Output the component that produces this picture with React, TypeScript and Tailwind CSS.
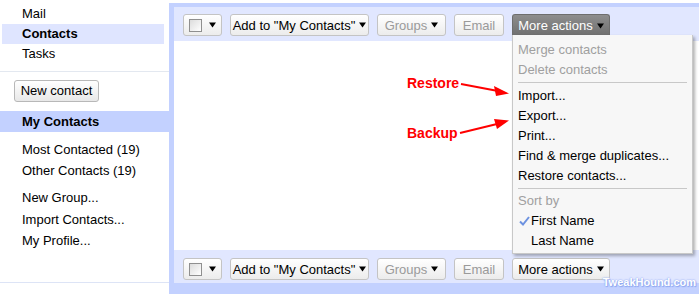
import { ReactNode } from "react";

function cn(...c: Array<string | false | undefined>) {
  return c.filter(Boolean).join(" ");
}

function Caret({ light }: { light?: boolean }) {
  return (
    <svg width="7" height="6" viewBox="0 0 7 6" className="inline-block">
      <path d="M0 0.5h7L3.5 5.5z" fill={light ? "#fff" : "#000"} />
    </svg>
  );
}

function Btn({
  children,
  className,
  disabled,
}: {
  children: ReactNode;
  className?: string;
  disabled?: boolean;
}) {
  return (
    <div
      className={cn(
        "flex h-[22px] items-center justify-center gap-[4px] rounded-[3px] border border-[#c4c4c4] bg-gradient-to-b from-[#ffffff] to-[#ececec] text-[13px] leading-none shadow-[inset_0_1px_0_#fff]",
        disabled ? "text-[#9a9a9a]" : "text-black",
        className,
      )}
    >
      {children}
    </div>
  );
}

function Toolbar({ active }: { active?: boolean }) {
  return (
    <div className="flex items-center gap-2 pl-[9px]">
      <Btn className="w-[39px] gap-[7px]">
        <span className="h-[13px] w-[13px] border border-[#8f8f8f] bg-gradient-to-br from-[#dcdcdc] to-[#ffffff]" />
        <Caret />
      </Btn>
      <Btn className="w-[139px]">
        Add to "My Contacts" <Caret />
      </Btn>
      <Btn className="w-[69px]" disabled>
        Groups <Caret />
      </Btn>
      <Btn className="w-[50px]" disabled>
        Email
      </Btn>
      {active ? (
        <div className="flex h-[22px] w-[98px] items-center justify-center gap-[4px] rounded-t-[3px] border border-b-0 border-[#6e6e6e] bg-gradient-to-b from-[#8e8e8e] to-[#6f6f6f] text-[13px] leading-none text-white">
          More actions <Caret />
        </div>
      ) : (
        <Btn className="w-[98px]">
          More actions <Caret />
        </Btn>
      )}
    </div>
  );
}

function MenuItem({ children, dim }: { children: ReactNode; dim?: boolean }) {
  return (
    <div className={cn("h-5 pl-[5px] leading-5", dim ? "text-[#a0a0a0]" : "text-black")}>{children}</div>
  );
}

export default function App() {
  return (
    <div
      className="relative flex h-[294px] w-[699px] overflow-hidden bg-white text-[13px]"
      style={{ fontFamily: '"Liberation Sans", Arial, sans-serif' }}
    >
      {/* sidebar */}
      <div className="flex w-[169px] shrink-0 flex-col pt-[4px] text-black">
        <div className="h-5 pl-[22px] leading-5">Mail</div>
        <div className="mx-[2px] h-5 w-[162px] bg-[#dfe5ff] pl-[20px] font-bold leading-5">Contacts</div>
        <div className="h-5 pl-[22px] leading-5">Tasks</div>
        <div className="mt-[7px] h-px bg-[#e3e8f0]" />
        <div className="mt-[8px] pl-[14px]">
          <div className="flex h-[22px] w-[85px] items-center justify-center rounded-[3px] border border-[#b8b8b8] bg-gradient-to-b from-white to-[#e8e8e8]">
            New contact
          </div>
        </div>
        <div className="mt-[9px] h-[21px] bg-[#c3d1ff] pl-[22px] font-bold leading-[21px]">My Contacts</div>
        <div className="mt-[7px] h-[21px] pl-[22px] leading-[21px]">Most Contacted (19)</div>
        <div className="h-[21px] pl-[22px] leading-[21px]">Other Contacts (19)</div>
        <div className="mt-[6px] h-[22px] pl-[22px] leading-[22px]">New Group...</div>
        <div className="h-[21px] pl-[22px] leading-[21px]">Import Contacts...</div>
        <div className="h-[21px] pl-[22px] leading-[21px]">My Profile...</div>
        <div className="mt-auto mb-[11px] h-px bg-[#dde4f6]" />
      </div>

      {/* main panel */}
      <div className="mt-[3px] flex h-[291px] flex-1 flex-col bg-[#c3d1ff] pl-[5px] pt-[4px]">
        <div className="flex h-[34px] shrink-0 flex-col bg-[#e1e7ff] pt-[7px]">
          <Toolbar active />
        </div>
        <div className="flex-1 bg-white" />
        <div className="flex h-[33px] shrink-0 flex-col bg-[#e1e7ff] pt-[8px]">
          <Toolbar />
        </div>
        <div className="h-[11px] shrink-0" />
      </div>

      {/* dropdown menu */}
      <div className="absolute left-[512px] top-[35px] w-[181px] border border-t-0 border-[#c8c8c8] bg-[#f7f7f7] pb-[2px] pt-[5px] shadow-[2px_2px_3px_rgba(0,0,0,0.3)]">
        <MenuItem dim>Merge contacts</MenuItem>
        <MenuItem dim>Delete contacts</MenuItem>
        <div className="mx-[5px] mb-[3px] mt-[2px] h-px bg-[#c8c8c8]" />
        <MenuItem>Import...</MenuItem>
        <MenuItem>Export...</MenuItem>
        <MenuItem>Print...</MenuItem>
        <MenuItem>Find &amp; merge duplicates...</MenuItem>
        <MenuItem>Restore contacts...</MenuItem>
        <div className="mx-[5px] my-[2px] h-px bg-[#c8c8c8]" />
        <MenuItem dim>Sort by</MenuItem>
        <div className="flex h-5 items-center pl-[6px] leading-5">
          <svg width="11" height="10" viewBox="0 0 11 10" className="mr-[1px]">
            <path d="M1 5.5l3 3L10 1" fill="none" stroke="#6d92e0" strokeWidth="2" />
          </svg>
          First Name
        </div>
        <div className="h-5 pl-[18px] leading-5">Last Name</div>
      </div>

      {/* annotations */}
      <span className="absolute left-[407px] top-[73px] text-[14px] font-bold text-[#ff0000]">Restore</span>
      <span className="absolute left-[407px] top-[123px] text-[14px] font-bold text-[#ff0000]">Backup</span>
      <svg className="pointer-events-none absolute left-0 top-0" width="699" height="294">
        <line x1="461" y1="84" x2="498" y2="91" stroke="#ff0000" strokeWidth="2" />
        <path d="M509 93.5L494 86L496 96z" fill="#ff0000" />
        <line x1="460" y1="133" x2="497" y2="124" stroke="#ff0000" strokeWidth="2" />
        <path d="M509 120.5L494 119L497 129z" fill="#ff0000" />
      </svg>

      {/* watermark */}
      <span
        className="absolute right-[3px] top-[276px] whitespace-nowrap text-[11px] font-bold leading-[13px] text-white"
        style={{ textShadow: "0 0 1px #8fa8f0, 0 0 2px #8fa8f0, 1px 1px 1px #8fa8f0" }}
      >
        TweakHound.com
      </span>
    </div>
  );
}
